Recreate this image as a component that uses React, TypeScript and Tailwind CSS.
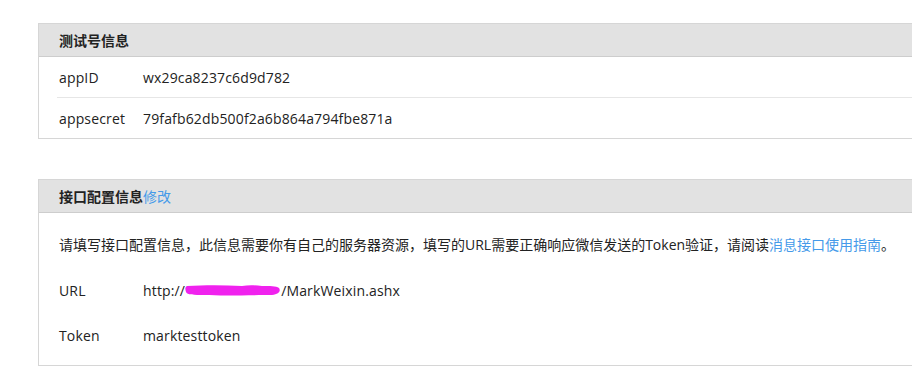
import type { ReactNode } from 'react'

const font = '[font-family:"Open_Sans","Noto_Sans_CJK_SC",sans-serif]'

function Panel({ title, children }: { title: ReactNode; children: ReactNode }) {
  return (
    <div className="w-[900px] border border-r-0 border-[#d6d6d6] bg-white">
      <div className="h-[33px] flex items-center pl-[20px] bg-[#e2e2e2] border-b border-[#cdcdcd] text-[14px] font-bold text-[#222]">
        {title}
      </div>
      {children}
    </div>
  )
}

function Row({ label, children, divider }: { label: string; children: ReactNode; divider?: boolean }) {
  return (
    <div className={divider ? 'ml-[18px] border-b border-[#e6e6e6]' : 'ml-[18px]'}>
      <div className="h-[40px] flex items-center pl-[2px] text-[14px] text-[#222] tracking-[0.15px]">
        <span className="w-[84px] shrink-0">{label}</span>
        <span>{children}</span>
      </div>
    </div>
  )
}

function Scribble() {
  return (
    <svg width="98" height="12" viewBox="0 0 98 12" className="inline-block align-middle mx-[-1px]">
      <path
        d="M3 2 C20 1 40 1 58 2 C64 1 70 1 78 2 C86 2 92 2 95 4 C97 7 95 10 88 11 C70 11 40 12 20 11 C10 11 3 11 2 8 C1 5 1 3 3 2 Z"
        fill="#f022ee"
      />
    </svg>
  )
}

export default function App() {
  return (
    <div className={`${font} w-[912px] h-[386px] overflow-hidden bg-white`}>
      <div className="pt-[23px] pl-[38px] flex flex-col gap-[40px]">
        <Panel title="测试号信息">
          <Row label="appID" divider>
            wx29ca8237c6d9d782
          </Row>
          <Row label="appsecret">79fafb62db500f2a6b864a794fbe871a</Row>
        </Panel>

        <Panel
          title={
            <>
              接口配置信息<span className="font-normal text-[#459ae9]">修改</span>
            </>
          }
        >
          <div className="pt-[17px] pl-[20px] text-[14px] text-[#222]">
            <p className="h-[28px] flex items-center whitespace-nowrap">
              请填写接口配置信息，此信息需要你有自己的服务器资源，填写的URL需要正确响应微信发送的Token验证，请阅读
              <span className="text-[#459ae9]">消息接口使用指南</span>。
            </p>
            <div className="mt-[22px] h-[20px] flex items-center tracking-[0.15px]">
              <span className="w-[84px] shrink-0">URL</span>
              <span className="flex items-center">
                http://
                <Scribble />
                /MarkWeixin.ashx
              </span>
            </div>
            <div className="mt-[25px] h-[20px] flex items-center tracking-[0.15px]">
              <span className="w-[84px] shrink-0">Token</span>
              <span>marktesttoken</span>
            </div>
            <div className="h-[20px]" />
          </div>
        </Panel>
      </div>
    </div>
  )
}
